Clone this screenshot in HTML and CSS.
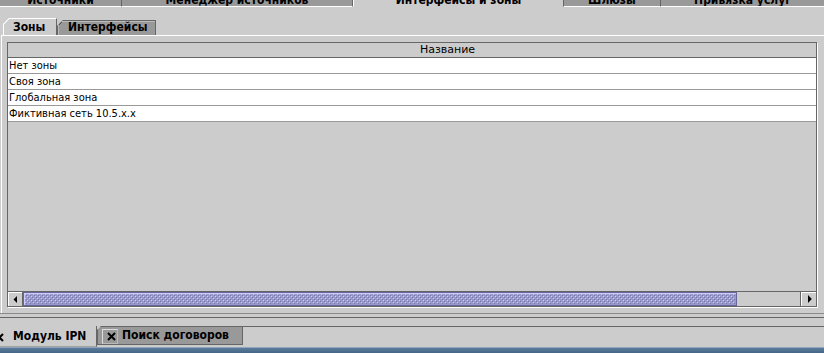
FILE: index.html
```html
<!DOCTYPE html>
<html lang="ru">
<head>
<meta charset="utf-8">
<title>Интерфейсы и зоны</title>
<link rel="stylesheet" href="styles.css">
</head>
<body>
<div class="app">
  <div class="top-tabs">
    <div class="ttab w1"><span>Источники</span></div>
    <div class="ttab w2"><span>Менеджер источников</span></div>
    <div class="ttab w3 sel"><span>Интерфейсы и зоны</span></div>
    <div class="ttab w4"><span>Шлюзы</span></div>
    <div class="ttab w5"><span>Привязка услуг</span></div>
  </div>

  <div class="main">
    <div class="inner-tabs">
      <div class="itab sel">Зоны</div>
      <div class="itab">Интерфейсы</div>
    </div>
    <div class="inner-content">
      <div class="scrollpane">
        <div class="viewport">
          <div class="table">
            <div class="thead">Название</div>
            <div class="row">Нет зоны</div>
            <div class="row">Своя зона</div>
            <div class="row">Глобальная зона</div>
            <div class="row">Фиктивная сеть 10.5.x.x</div>
          </div>
        </div>
        <div class="hscroll">
          <div class="arrow left">
            <svg width="4" height="7" viewBox="0 0 4 7"><polygon points="4,0 4,7 0.5,3.5" fill="#000"/></svg>
          </div>
          <div class="track">
            <div class="thumb">
              <svg class="bumps" width="100%" height="100%">
                <defs>
                  <pattern id="bp" width="4" height="4" patternUnits="userSpaceOnUse">
                    <rect width="4" height="4" fill="#9999cc"/>
                    <rect x="0" y="0" width="1" height="1" fill="#ccccff"/>
                    <rect x="2" y="2" width="1" height="1" fill="#ccccff"/>
                    <rect x="1" y="1" width="1" height="1" fill="#7777aa"/>
                    <rect x="3" y="3" width="1" height="1" fill="#7777aa"/>
                  </pattern>
                </defs>
                <rect width="100%" height="100%" fill="url(#bp)"/>
              </svg>
            </div>
          </div>
          <div class="arrow right">
            <svg width="4" height="8" viewBox="0 0 4 8"><polygon points="0,0 0,8 3.8,4" fill="#000"/></svg>
          </div>
        </div>
      </div>
    </div>
  </div>

  <div class="sep sep-a"></div>
  <div class="gap3"></div>
  <div class="sep sep-b"></div>
  <div class="gap8"></div>

  <div class="btabs">
    <div class="btab sel">
      <span class="close">
        <svg width="9" height="9" viewBox="0 0 9 9"><path d="M1 1 L8 8 M8 1 L1 8" stroke="#000" stroke-width="2"/></svg>
      </span>
      <span class="blabel">Модуль IPN</span>
    </div>
    <div class="btab other">
      <span class="close boxed">
        <svg width="9" height="9" viewBox="0 0 9 9"><path d="M1 1 L8 8 M8 1 L1 8" stroke="#000" stroke-width="2"/></svg>
      </span>
      <span class="blabel">Поиск договоров</span>
    </div>
    <div class="bfill"></div>
  </div>

  <div class="taskbar"></div>
</div>
</body>
</html>
```
FILE: styles.css
```css
* { box-sizing: border-box; }
html, body { margin: 0; padding: 0; }
body {
  width: 824px;
  height: 353px;
  overflow: hidden;
  background: #cccccc;
  color: #000;
  font-family: "DejaVu Sans Condensed", "DejaVu Sans", sans-serif;
  font-stretch: condensed;
}
.app { display: flex; flex-direction: column; height: 353px; }

/* ---------- top (cut-off) tab strip ---------- */
.top-tabs { display: flex; height: 7px; flex: none; }
.ttab {
  height: 7px;
  overflow: hidden;
  display: flex;
  justify-content: center;
  align-items: flex-start;
  background: #999999;
  border-bottom: 1px solid #ffffff;
  border-right: 1px solid #666666;
  font-weight: bold;
  font-size: 12px;
}
.ttab span { line-height: 14px; margin-top: -7px; white-space: nowrap; }
.ttab.sel { background: #cccccc; border-bottom-color: #cccccc; border-left: 1px solid #ffffff; }
.w1 { width: 122px; }
.w2 { width: 231px; }
.w3 { width: 211px; }
.w4 { width: 97px; }
.w5 { width: 163px; border-right: none; }

/* ---------- main area ---------- */
.main {
  height: 306px;
  flex: none;
  padding: 11px 0 0 1px;
  display: flex;
  flex-direction: column;
}
.inner-tabs { display: flex; align-items: flex-end; height: 17px; margin-left: 2px; flex: none; }
.itab {
  font-weight: bold;
  font-size: 12px;
  white-space: nowrap;
  clip-path: polygon(6px 0, 100% 0, 100% 100%, 0 100%, 0 6px);
  background-origin: border-box;
  background-repeat: no-repeat;
  background-size: 7px 7px;
}
.itab.sel {
  width: 54px;
  height: 17px;
  padding-left: 9px;
  line-height: 16px;
  background-color: #cccccc;
  background-image: linear-gradient(to bottom right, transparent 4.1px, #ffffff 4.1px, #ffffff 5.3px, transparent 5.3px);
  border-top: 1px solid #ffffff;
  border-left: 1px solid #ffffff;
  border-right: 1px solid #666666;
}
.itab:not(.sel) {
  width: 99px;
  height: 15px;
  padding-left: 10px;
  line-height: 12px;
  background-color: #999999;
  background-image: linear-gradient(to bottom right, transparent 4.1px, #555555 4.1px, #555555 5.3px, transparent 5.3px);
  border-top: 1px solid #666666;
  border-left: 1px solid #666666;
  border-right: 1px solid #666666;
  box-shadow: inset 1px 1px 0 #bbbbbb;
}

.inner-content {
  flex: 1;
  border-top: 1px solid #ffffff;
  border-left: 1px solid #ffffff;
  padding: 6px 6px 6px 5px;
  display: flex;
  flex-direction: column;
}

.scrollpane {
  width: 810px;
  height: 265px;
  border: 1px solid #666666;
  box-shadow: 1px 1px 0 #ffffff;
  display: flex;
  flex-direction: column;
}
.viewport { flex: 1; overflow: hidden; background: #cccccc; }
.table { width: 879px; font-size: 11px; }
.thead {
  height: 15px;
  border-bottom: 1px solid #666666;
  text-align: center;
  line-height: 14px;
  background: #cccccc;
  font-family: "DejaVu Sans", sans-serif;
  font-stretch: normal;
}
.row {
  height: 16px;
  background: #ffffff;
  border-bottom: 1px solid #999999;
  line-height: 15px;
  padding-left: 1px;
  white-space: nowrap;
}

/* ---------- horizontal scrollbar ---------- */
.hscroll { height: 15px; flex: none; display: flex; border-top: 1px solid #666666; }
.arrow {
  flex: none;
  display: flex;
  align-items: center;
  justify-content: center;
  background: #cccccc;
  box-shadow: inset 1px 1px 0 #ffffff;
}
.arrow.left { width: 15px; border-right: 1px solid #666666; padding-right: 1px; }
.arrow.right { width: 16px; border-left: 1px solid #666666; padding-left: 2px; }
.track { flex: 1; display: flex; background: #cccccc; }
.thumb {
  width: 714px;
  height: 14px;
  border: 1px solid #666699;
  background: #9999cc;
  box-shadow: inset 1px 1px 0 #ccccff;
  padding: 1px;
  display: flex;
}
.bumps { display: block; }

/* ---------- bottom separators ---------- */
.sep { height: 1px; flex: none; }
.sep-a { background: #8a8a8a; }
.sep-b { background: #666666; }
.gap3 { height: 3px; flex: none; }
.gap8 { height: 8px; flex: none; }

/* ---------- bottom tabs ---------- */
.btabs { height: 21px; flex: none; display: flex; align-items: flex-start; }
.btab {
  display: flex;
  align-items: center;
  flex: none;
  font-weight: bold;
  font-size: 12px;
  white-space: nowrap;
}
.btab.sel {
  width: 112px;
  height: 21px;
  margin-left: -15px;
  padding-left: 5px;
  gap: 7px;
  background: #cccccc;
  border-right: 1px solid #666666;
  border-bottom: 1px solid #a0a0a0;
  line-height: 20px;
}
.btab.other {
  width: 146px;
  height: 19px;
  padding-left: 4px;
  gap: 4px;
  background: #999999;
  border: 1px solid #666666;
  clip-path: polygon(4px 0, 100% 0, 100% 100%, 0 100%, 0 4px);
  line-height: 16px;
}
.close {
  width: 16px;
  height: 15px;
  flex: none;
  display: flex;
  align-items: flex-end;
  justify-content: center;
  padding-bottom: 2px;
  padding-left: 2px;
}
.close.boxed {
  border-top: 1px solid #dddddd;
  border-left: 1px solid #dddddd;
  border-right: 1px solid #bbbbbb;
  border-bottom: 1px solid #bbbbbb;
  margin-top: 1px;
}
.blabel { display: block; }
.btab.other .blabel { margin-top: -1px; }
.bfill { flex: 1; height: 21px; border-top: 1px solid #666666; }

.taskbar {
  height: 6px;
  flex: none;
  background: linear-gradient(to bottom, #8ea5bb 0, #8ea5bb 1px, #5b7b99 1px, #456687 100%);
}
```
